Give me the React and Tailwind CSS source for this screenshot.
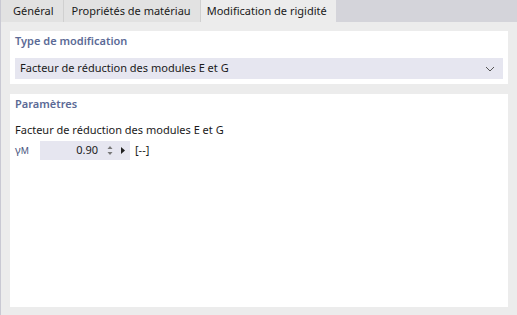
import React from "react";

export default function App() {
  const font = { fontFamily: '"Segoe UI", "Noto Sans", "Open Sans", sans-serif' };
  return (
    <div className="w-[517px] h-[315px] bg-[#ececec] flex flex-col text-[11px] text-[#1a1a1a] border-l border-[#c9c9d3]" style={font}>
      <div className="h-[22px] flex bg-[#d4d4da] shrink-0">
        <div className="h-full pl-[12px] pr-[9px] flex items-center bg-[#e2e2e2] border-r border-[#d0d0d0]">Général</div>
        <div className="h-full pl-[8px] pr-[9px] flex items-center bg-[#e2e2e2] border-r border-[#d0d0d0]">Propriétés de matériau</div>
        <div className="h-full pl-[6px] pr-[9px] flex items-center bg-[#ececec]">Modification de rigidité</div>
      </div>
      <div className="flex-1 flex flex-col px-[9px] pt-[9px] pb-[8px] gap-[10px]">
        <div className="bg-white px-[5px] pt-[1px] pb-[5px] flex flex-col">
          <div className="h-[18px] flex items-center font-semibold text-[#5b6a96]">Type de modification</div>
          <div className="mt-[8px] h-[21px] bg-[#e6e6f0] flex items-center justify-between pl-[5px] pr-[8px]">
            <span>Facteur de réduction des modules E et G</span>
            <svg width="10" height="6" viewBox="0 0 10 6"><path d="M1 1 L5 5 L9 1" fill="none" stroke="#555" strokeWidth="1" /></svg>
          </div>
        </div>
        <div className="flex-1 bg-white px-[5px] pt-[1px] flex flex-col">
          <div className="h-[18px] flex items-center font-semibold text-[#5b6a96]">Paramètres</div>
          <div className="mt-[8px] h-[18px] flex items-center">Facteur de réduction des modules E et G</div>
          <div className="mt-[2px] h-[19px] flex items-center">
            <span className="w-[25px] text-[#4a5580]">γ<span className="text-[9px]">M</span></span>
            <div className="w-[90px] h-full bg-[#e6e6f0] flex items-center justify-end pr-[5px]">
              <span className="mr-[9px]">0.90</span>
              <svg width="6" height="11" viewBox="0 0 6 11" className="mr-[8px]">
                <path d="M0.5 4 L3 1 L5.5 4 Z" fill="#777" />
                <path d="M0.5 7 L3 10 L5.5 7 Z" fill="#777" />
              </svg>
              <svg width="4" height="7" viewBox="0 0 4 7"><path d="M0 0 L4 3.5 L0 7 Z" fill="#222" /></svg>
            </div>
            <span className="ml-[5px]">[--]</span>
          </div>
        </div>
      </div>
    </div>
  );
}
